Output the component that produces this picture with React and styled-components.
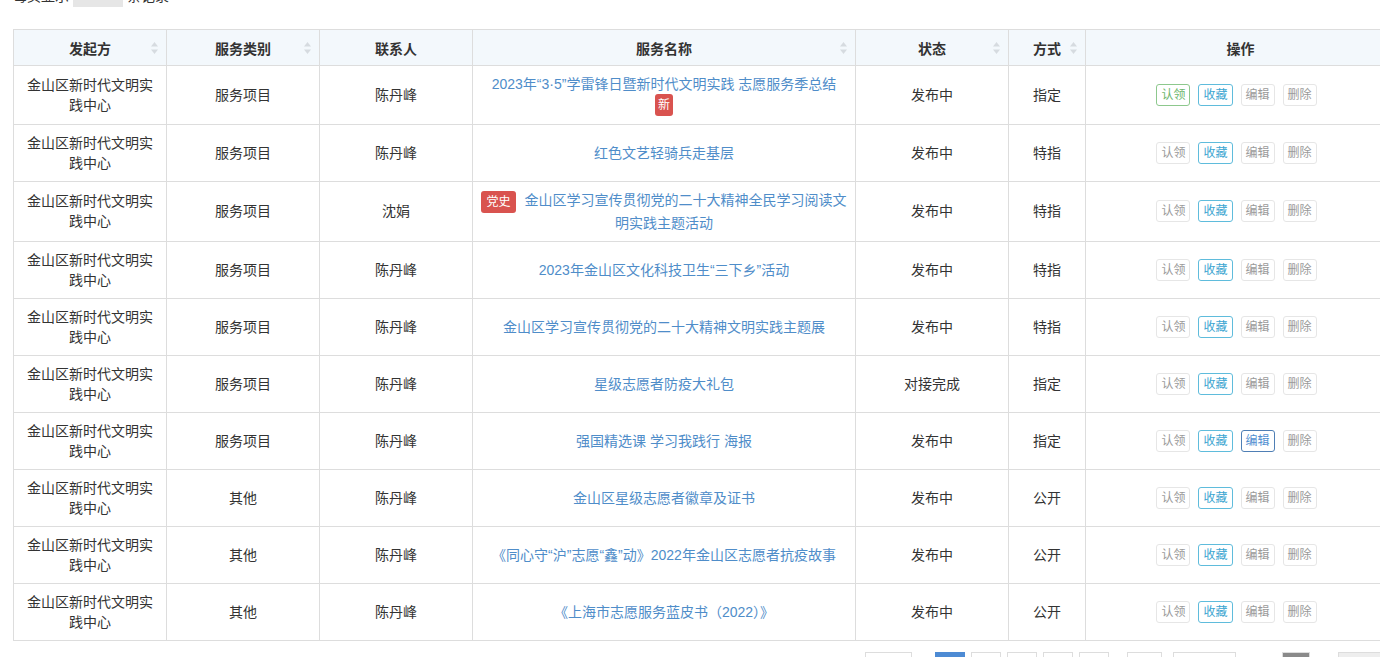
import React from "react";
import styled, { createGlobalStyle } from "styled-components";

const Global = createGlobalStyle`
  html, body {
    margin: 0;
    padding: 0;
    overflow: hidden;
    background: #ffffff;
  }
  body {
    font-family: "Liberation Sans", "Noto Sans CJK SC", sans-serif;
    font-size: 14px;
    color: #333333;
  }
`;

const Page = styled.div`
  width: 1400px;
  margin-top: -17px;
  padding-left: 13px;
`;

const Toolbar = styled.div`
  display: flex;
  align-items: center;
  height: 24px;
  gap: 4px;
  margin-bottom: 22px;
  font-size: 14px;
  color: #333;
`;

const PageSize = styled.div`
  width: 50px;
  height: 24px;
  background: #e6e6e6;
  display: flex;
  align-items: center;
  justify-content: space-between;
  padding: 0 8px;
  box-sizing: border-box;
  font-size: 13px;
`;

const Table = styled.table`
  border-collapse: collapse;
  table-layout: fixed;
  width: 1382px;
  border: 1px solid #dddddd;
`;

const Th = styled.th`
  position: relative;
  height: 35px;
  padding: 0 8px;
  background: #f3f8fc;
  border: 1px solid #dddddd;
  font-weight: bold;
  font-size: 14px;
  color: #333;
  text-align: center;
`;

const SortIcon = styled.svg`
  position: absolute;
  right: 8px;
  top: 50%;
  margin-top: -6px;
`;

const Td = styled.td`
  padding: 8px 8px;
  border: 1px solid #dddddd;
  border-top-color: #e3e3e3;
  text-align: center;
  vertical-align: middle;
  line-height: 20px;
  font-size: 14px;
  color: #333;
`;

const TitleLink = styled.a`
  color: #4f8dc9;
  text-decoration: none;
  cursor: pointer;
`;

const Badge = styled.span`
  display: inline-block;
  background: #d9534f;
  color: #ffffff;
  font-size: 12px;
  line-height: 22px;
  padding: 0 ${(p) => (p.wide ? "5px" : "3px")};
  border-radius: 3px;
  margin-right: ${(p) => (p.wide ? "9px" : "0")};
  vertical-align: middle;
`;

const Actions = styled.div`
  display: flex;
  justify-content: center;
  gap: 8px;
  padding-right: 8px;
`;

const tones = {
  plain: { border: "#e6e6e6", color: "#9a9a9a" },
  green: { border: "#8dc88d", color: "#6db66d" },
  info: { border: "#5fbcdc", color: "#3ba5d1" },
  blue: { border: "#4f7fb5", color: "#4f8ed0" },
};

const ActBtn = styled.span`
  display: inline-block;
  font-size: 12px;
  line-height: 20px;
  padding: 0 4px;
  border: 1px solid ${(p) => tones[p.tone].border};
  color: ${(p) => tones[p.tone].color};
  border-radius: 3px;
  background: #fff;
  cursor: pointer;
`;

const Footer = styled.div`
  display: grid;
  grid-template-columns: 846px 1fr;
  margin-top: 11px;
  align-items: start;
`;

const Total = styled.div`
  padding-left: 40px;
  padding-top: 4px;
  font-size: 14px;
  color: #555;
`;

const Pager = styled.div`
  display: flex;
  align-items: center;
`;

const PageBtn = styled.span`
  display: inline-block;
  box-sizing: border-box;
  width: ${(p) => p.w || 30}px;
  height: 30px;
  margin-left: ${(p) => p.ml || 6}px;
  border: 1px solid ${(p) => (p.active ? "#4d8bd4" : "#dddddd")};
  background: ${(p) => (p.active ? "#4d8bd4" : p.bg || "#fff")};
  color: ${(p) => (p.active ? "#fff" : "#4d8fcc")};
  font-size: 13px;
  line-height: 28px;
  text-align: center;
`;

function Sort() {
  return (
    <SortIcon width="7" height="12" viewBox="0 0 7 12">
      <path d="M3.5 0 L7 4.5 L0 4.5 Z" fill="#d6dbe0" />
      <path d="M3.5 12 L7 7.5 L0 7.5 Z" fill="#d6dbe0" />
    </SortIcon>
  );
}

const ORG = "金山区新时代文明实践中心";

const rows = [
  { type: "服务项目", who: "陈丹峰", title: "2023年“3·5”学雷锋日暨新时代文明实践 志愿服务季总结", badge: "new", state: "发布中", mode: "指定", claim: "green" },
  { type: "服务项目", who: "陈丹峰", title: "红色文艺轻骑兵走基层", state: "发布中", mode: "特指" },
  { type: "服务项目", who: "沈娟", title: "金山区学习宣传贯彻党的二十大精神全民学习阅读文明实践主题活动", badge: "party", state: "发布中", mode: "特指" },
  { type: "服务项目", who: "陈丹峰", title: "2023年金山区文化科技卫生“三下乡”活动", state: "发布中", mode: "特指" },
  { type: "服务项目", who: "陈丹峰", title: "金山区学习宣传贯彻党的二十大精神文明实践主题展", state: "发布中", mode: "特指" },
  { type: "服务项目", who: "陈丹峰", title: "星级志愿者防疫大礼包", state: "对接完成", mode: "指定" },
  { type: "服务项目", who: "陈丹峰", title: "强国精选课 学习我践行 海报", state: "发布中", mode: "指定", edit: "blue" },
  { type: "其他", who: "陈丹峰", title: "金山区星级志愿者徽章及证书", state: "发布中", mode: "公开" },
  { type: "其他", who: "陈丹峰", title: "《同心守“沪”志愿“鑫”动》2022年金山区志愿者抗疫故事", state: "发布中", mode: "公开" },
  { type: "其他", who: "陈丹峰", title: "《上海市志愿服务蓝皮书（2022）》", state: "发布中", mode: "公开" },
];

export default function App() {
  return (
    <Page>
      <Global />
      <Toolbar>
        <span>每页显示</span>
        <PageSize>
          <span>10</span>
          <span style={{ fontSize: 9 }}>▼</span>
        </PageSize>
        <span>条记录</span>
      </Toolbar>

      <Table>
        <colgroup>
          <col style={{ width: 153 }} />
          <col style={{ width: 153 }} />
          <col style={{ width: 153 }} />
          <col style={{ width: 383 }} />
          <col style={{ width: 153 }} />
          <col style={{ width: 77 }} />
          <col style={{ width: 310 }} />
        </colgroup>
        <thead>
          <tr>
            <Th>发起方<Sort /></Th>
            <Th>服务类别<Sort /></Th>
            <Th>联系人</Th>
            <Th>服务名称<Sort /></Th>
            <Th>状态<Sort /></Th>
            <Th>方式<Sort /></Th>
            <Th>操作</Th>
          </tr>
        </thead>
        <tbody>
          {rows.map((r, i) => (
            <tr key={i}>
              <Td>{ORG}</Td>
              <Td>{r.type}</Td>
              <Td>{r.who}</Td>
              <Td>
                {r.badge === "party" && <Badge wide>党史</Badge>}
                <TitleLink>{r.title}</TitleLink>
                {r.badge === "new" && (
                  <>
                    <br />
                    <Badge>新</Badge>
                  </>
                )}
              </Td>
              <Td>{r.state}</Td>
              <Td>{r.mode}</Td>
              <Td>
                <Actions>
                  <ActBtn tone={r.claim || "plain"}>认领</ActBtn>
                  <ActBtn tone="info">收藏</ActBtn>
                  <ActBtn tone={r.edit || "plain"}>编辑</ActBtn>
                  <ActBtn tone="plain">删除</ActBtn>
                </Actions>
              </Td>
            </tr>
          ))}
        </tbody>
      </Table>

      <Footer>
        <Total>共 100 条数据</Total>
        <Pager>
          <PageBtn w={47} ml={0}>上一页</PageBtn>
          <PageBtn active ml={23}>1</PageBtn>
          <PageBtn>2</PageBtn>
          <PageBtn>3</PageBtn>
          <PageBtn>4</PageBtn>
          <PageBtn>5</PageBtn>
          <PageBtn w={35} ml={18}>...</PageBtn>
          <PageBtn w={63} ml={11}>下一页</PageBtn>
          <PageBtn w={28} ml={46} bg="#8a8a8a">GO</PageBtn>
          <PageBtn w={50} ml={28} bg="#eeeeee">1</PageBtn>
        </Pager>
      </Footer>
    </Page>
  );
}
